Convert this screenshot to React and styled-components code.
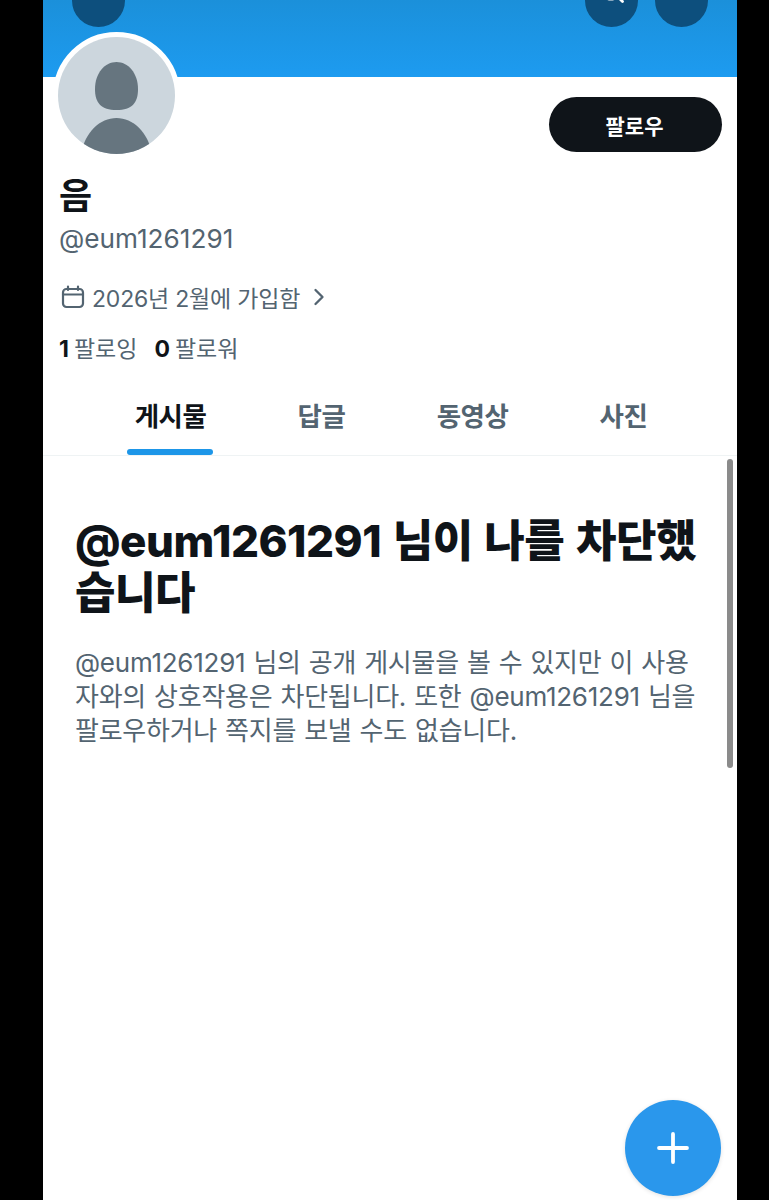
import React from "react";
import styled, { createGlobalStyle } from "styled-components";
import { Search, ArrowLeft, Plus, ChevronRight } from "lucide-react";

const Global = createGlobalStyle`
  html, body { margin: 0; padding: 0; background: #000; }
  body { font-family: Inter, "Noto Sans CJK KR", sans-serif; }
`;

const Page = styled.div`
  width: 769px;
  height: 1200px;
  background: #000;
  display: flex;
  justify-content: flex-start;
  padding-left: 43px;
  box-sizing: border-box;
  overflow: hidden;
`;

const Phone = styled.main`
  position: relative;
  width: 694px;
  height: 1200px;
  background: #fff;
  overflow: hidden;
`;

const Banner = styled.header`
  height: 77px;
  box-sizing: border-box;
  padding: 0 29px 50px 29px;
  background: linear-gradient(#1b90da, #1d9bf0);
  display: flex;
  align-items: flex-end;
  gap: 17px;
  overflow: hidden;
`;

const RoundButton = styled.button`
  flex: none;
  width: 53px;
  height: 53px;
  padding: 0 0 ${(p) => p.$lift || 0}px;
  border: 0;
  border-radius: 50%;
  background: #0d4f7d;
  color: #fff;
  display: flex;
  align-items: center;
  justify-content: center;
  margin-left: ${(p) => (p.$push ? "auto" : "0")};
`;

const ProfileTop = styled.section`
  display: flex;
  justify-content: space-between;
  align-items: flex-start;
  padding: 20px 15px 0 10px;
  height: 77px;
`;

const Avatar = styled.div`
  width: 117px;
  height: 117px;
  margin-top: -65px;
  border-radius: 50%;
  border: 5px solid #fff;
  background: #fff;
  overflow: hidden;
  flex: none;
  svg { display: block; }
`;

const FollowButton = styled.button`
  width: 173px;
  height: 55px;
  padding: 0 2px 0 0;
  border: 0;
  border-radius: 28px;
  background: #0f1419;
  color: #fff;
  font: 700 21px "Noto Sans CJK KR", sans-serif;
`;

const Info = styled.section`
  padding: 0 16px;
`;

const Name = styled.h1`
  margin: -3px 0 0;
  font: 700 36px/44px "Noto Sans CJK KR", sans-serif;
  color: #0f1419;
`;

const Handle = styled.div`
  margin-top: 9px;
  font-size: 26.2px;
  line-height: 30px;
  color: #536471;
`;

const Joined = styled.div`
  margin-top: 27px;
  display: flex;
  align-items: center;
  gap: 7px;
  height: 32px;
  font-size: 23px;
  color: #536471;
  letter-spacing: -0.2px;
  svg { flex: none; }
`;

const CalendarGlyph = styled.svg`
  margin-left: 2px;
`;

const Chevron = styled(ChevronRight)`
  margin-left: -2px;
`;

const Stats = styled.div`
  margin-top: 18px;
  display: flex;
  gap: 17px;
  height: 32px;
  align-items: center;
  font-size: 23px;
  color: #536471;
`;

const Stat = styled.span`
  b { color: #0f1419; font-weight: 700; margin-right: 5px; }
`;

const Tabs = styled.nav`
  margin-top: 19px;
  display: grid;
  grid-template-columns: repeat(4, 151px);
  padding-left: 52px;
  height: 73px;
  border-bottom: 1px solid #eff3f4;
`;

const Tab = styled.div`
  position: relative;
  display: flex;
  justify-content: center;
  padding-top: 15px;
  font: 700 26.5px/36px "Noto Sans CJK KR", sans-serif;
  letter-spacing: -0.5px;
  color: ${(p) => (p.$active ? "#0f1419" : "#536471")};
  ${(p) =>
    p.$active &&
    `&::after {
      content: "";
      position: absolute;
      left: 32px;
      bottom: 0;
      width: 86px;
      height: 6px;
      border-radius: 3px;
      background: #1d96e8;
    }`}
`;

const Notice = styled.section`
  padding: 59px 40px 0 32px;
`;

const Title = styled.h2`
  margin: 0;
  font: 800 44px/52px Inter, "Noto Sans CJK KR", sans-serif;
  letter-spacing: -0.5px;
  word-spacing: 2.5px;
  color: #0f1419;
`;

const Body = styled.p`
  margin: 27px 0 0;
  font-size: 26px;
  line-height: 34px;
  letter-spacing: -0.25px;
  word-spacing: 1px;
  color: #536471;
`;

const Scrollbar = styled.div`
  position: absolute;
  left: 684px;
  top: 459px;
  width: 6px;
  height: 309px;
  border-radius: 3px;
  background: #8b8b8b;
`;

const Fab = styled.button`
  position: absolute;
  left: 582px;
  top: 1100px;
  width: 96px;
  height: 96px;
  padding: 0;
  border: 0;
  border-radius: 50%;
  background: #2a97ec;
  color: #fff;
  display: flex;
  align-items: center;
  justify-content: center;
  box-shadow: 0 1px 4px rgba(0, 0, 0, 0.12);
`;

const CalendarIcon = () => (
  <CalendarGlyph width="24" height="24" viewBox="0 0 24 24" fill="none" stroke="#536471" strokeWidth="2.2" strokeLinecap="round">
    <rect x="2" y="4" width="20" height="18" rx="3.5" />
    <path d="M2 9.500h20M7 1.500v3.500M17 1.500v3.500" />
  </CalendarGlyph>
);

const DefaultAvatar = () => (
  <svg width="117" height="117" viewBox="0 0 117 117">
    <rect width="117" height="117" fill="#ccd6dd" />
    <path d="M58.500 25C70 25 80 36 80 52C80 66 74 73 58.500 73C43 73 37 66 37 52C37 36 47 25 58.500 25z" fill="#66757f" />
    <path d="M23 117c4-22 19-36 35.500-36S90 95 94 117z" fill="#66757f" />
  </svg>
);

export default function App() {
  return (
    <Page>
      <Global />
      <Phone>
        <Banner>
          <RoundButton $lift={26} aria-label="back"><ArrowLeft size={26} /></RoundButton>
          <RoundButton $push $lift={20} aria-label="search"><Search size={28} strokeWidth={2.4} /></RoundButton>
          <RoundButton aria-label="more" />
        </Banner>
        <ProfileTop>
          <Avatar><DefaultAvatar /></Avatar>
          <FollowButton>팔로우</FollowButton>
        </ProfileTop>
        <Info>
          <Name>음</Name>
          <Handle>@eum1261291</Handle>
          <Joined>
            <CalendarIcon />
            <span>2026년 2월에 가입함</span>
            <Chevron size={28} strokeWidth={2} />
          </Joined>
          <Stats>
            <Stat><b>1</b>팔로잉</Stat>
            <Stat><b>0</b>팔로워</Stat>
          </Stats>
        </Info>
        <Tabs>
          <Tab $active>게시물</Tab>
          <Tab>답글</Tab>
          <Tab>동영상</Tab>
          <Tab>사진</Tab>
        </Tabs>
        <Notice>
          <Title>@eum1261291 님이 나를 차단했습니다</Title>
          <Body>@eum1261291 님의 공개 게시물을 볼 수 있지만 이 사용자와의 상호작용은 차단됩니다. 또한 @eum1261291 님을 팔로우하거나 쪽지를 보낼 수도 없습니다.</Body>
        </Notice>
        <Scrollbar />
        <Fab aria-label="compose"><Plus size={48} strokeWidth={1.9} /></Fab>
      </Phone>
    </Page>
  );
}
